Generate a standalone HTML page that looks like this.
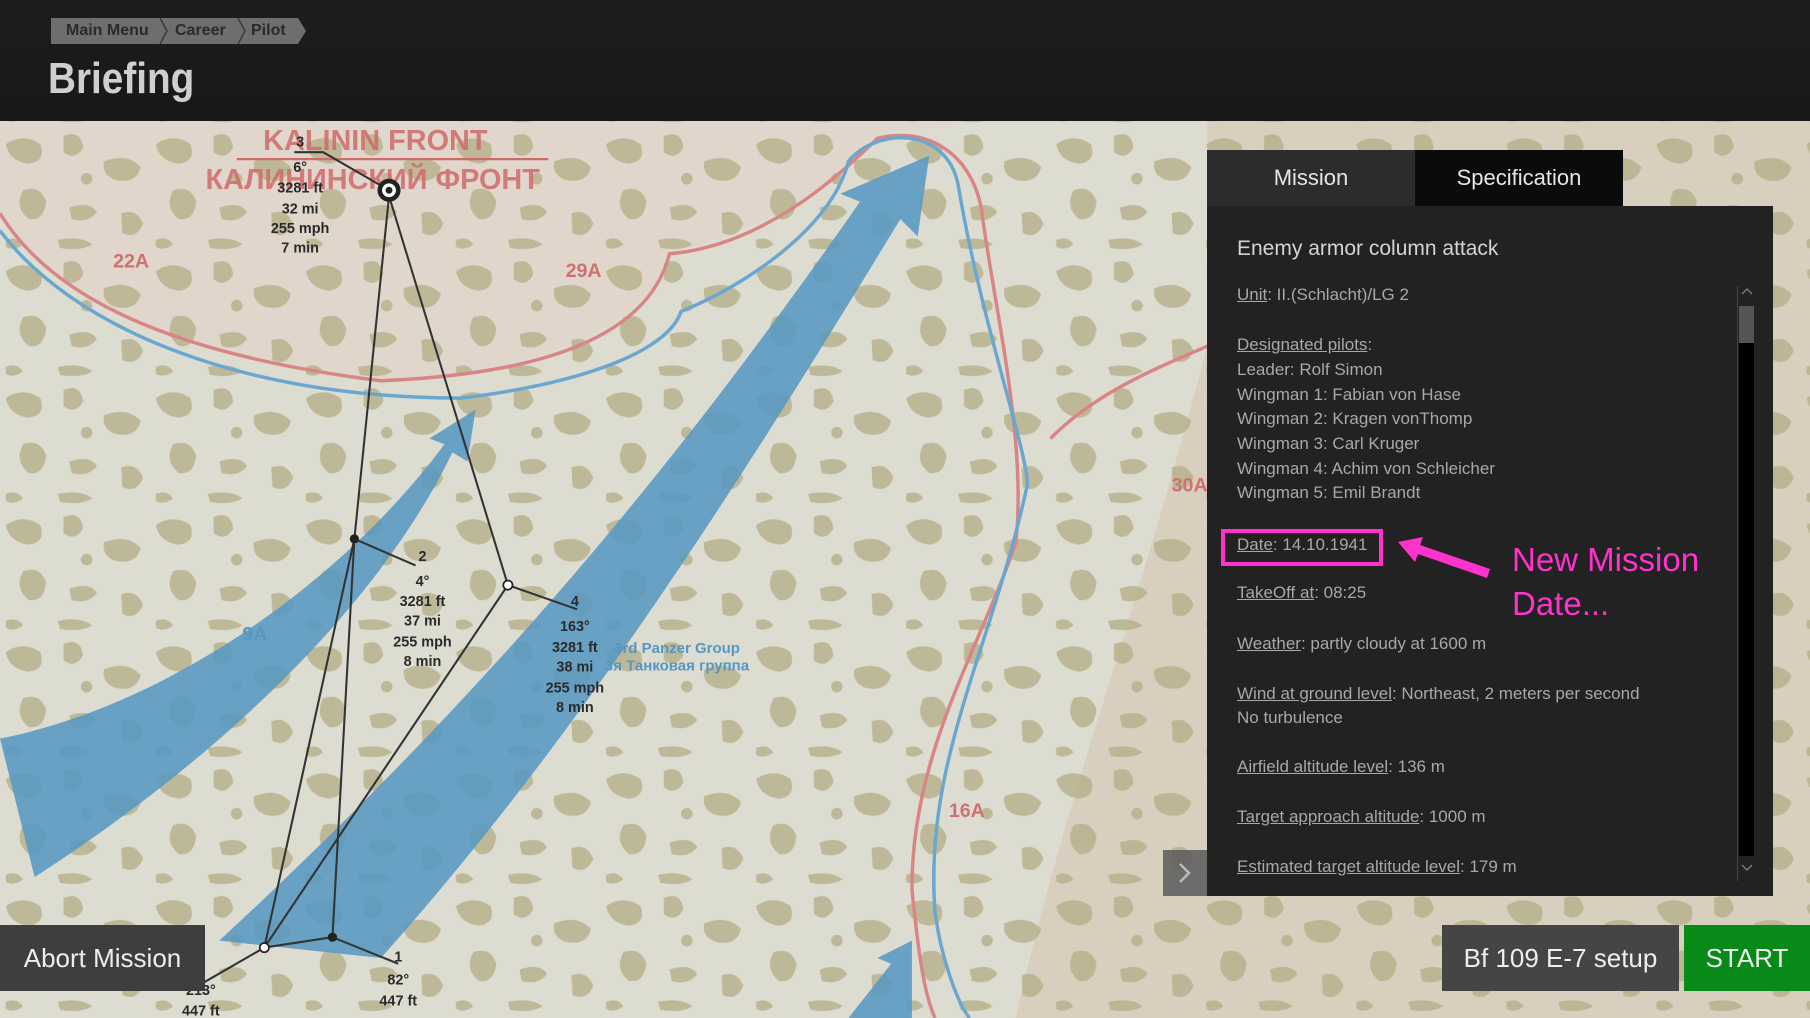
<!DOCTYPE html>
<html><head><meta charset="utf-8"><style>
*{margin:0;padding:0;box-sizing:border-box}
body{width:1810px;height:1018px;overflow:hidden;background:#1b1b1b;font-family:"Liberation Sans",sans-serif;position:relative}
#top{position:absolute;left:0;top:0;width:1810px;height:121px;background:linear-gradient(180deg,#1d1d1d,#181818)}
.bc{position:absolute;top:18px;height:26px;background:#6e6e6e;color:#2a2a2a;font-weight:bold;font-size:16px;line-height:26px}
h1{position:absolute;left:48px;top:54px;color:#cfcfcf;font-size:44px;font-weight:bold;transform:scaleX(0.88);transform-origin:0 0}
#map{position:absolute;left:0;top:121px}
.panel{position:absolute;left:1207px;top:206px;width:566px;height:690px;background:#222}
.tab{position:absolute;top:150px;height:56px;color:#e6e6e6;font-size:22px;text-align:center;line-height:56px}
.t{position:absolute;left:1237px;color:#a8a8a8;font-size:17px;white-space:nowrap}
.t u{text-decoration:underline}
.btn{position:absolute;top:925px;height:66px;color:#eee;font-size:26px;line-height:66px;text-align:center}
</style></head><body>
<div id="top"></div>
<div class="bc" style="left:51px;width:110px;padding-left:15px">Main Menu</div>
<div class="bc" style="left:161px;width:78px;padding-left:14px">Career</div>
<div class="bc" style="left:239px;width:67px;padding-left:12px;clip-path:polygon(0 0,88% 0,100% 50%,88% 100%,0 100%)">Pilot</div>
<svg style="position:absolute;left:0;top:18px" width="310" height="26"><path d="M160 0 L167 13 L160 26 M238 0 L245 13 L238 26" stroke="#3a3a3a" stroke-width="1.5" fill="none"/></svg>
<h1>Briefing</h1>

<svg id="map" width="1810" height="897" viewBox="0 105 1568 777" preserveAspectRatio="none">
<defs>
<pattern id="blob" width="130" height="110" patternUnits="userSpaceOnUse">
<path d="M5 15 Q20 5 35 15 Q40 30 25 32 Q8 30 5 15Z" fill="#b5b08a"/>
<path d="M55 8 Q70 2 72 18 Q65 30 55 22Z" fill="#b5b08a"/>
<path d="M90 30 Q110 22 122 35 Q118 50 100 46 Q88 42 90 30Z" fill="#b5b08a"/>
<path d="M20 55 Q35 50 40 65 Q38 82 25 80 Q12 70 20 55Z" fill="#b5b08a"/>
<path d="M60 70 Q78 64 84 74 Q76 84 62 80Z" fill="#b5b08a"/>
<path d="M105 75 Q118 70 124 84 Q118 98 106 92Z" fill="#b5b08a"/>
<path d="M5 98 Q15 94 20 102 Q12 108 5 104Z" fill="#b5b08a"/>
<path d="M50 98 Q70 94 80 102 Q70 108 52 105Z" fill="#b5b08a"/>
<circle cx="75" cy="45" r="5" fill="#b5b08a"/>
</pattern>
</defs>
<rect x="0" y="105" width="1568" height="777" fill="#dddcd1"/>
<path d="M0 185 C40 250 130 305 330 330 C450 325 560 290 580 220 C640 205 720 170 760 115 L860 105 L0 105Z" fill="#e0d6cc"/>
<path d="M1046 105 L1568 105 L1568 882 L880 882 C920 700 980 550 1046 300Z" fill="#d9cfbf"/>
<rect x="0" y="105" width="1568" height="777" fill="url(#blob)" opacity="0.8"/>
<g fill="#5597c3" opacity="0.85">
<path d="M0 640 C150 610 300 500 385 385 L372 380 L412 355 L405 400 L392 392 C330 520 200 650 30 760Z"/>
<path d="M190 815 C400 620 560 440 745 175 L728 168 L805 135 L795 205 L780 190 C640 420 500 640 330 830Z"/>
<path d="M735 882 L772 835 L760 830 L790 815 L790 882Z"/>
</g>
<g fill="none" stroke-width="3">
<path d="M0 185 C40 250 130 305 330 330 C450 325 560 300 580 220 C640 215 700 180 760 120 C800 110 840 130 850 180 C860 260 890 380 880 470 C850 560 790 650 790 770 C795 820 800 860 810 882" stroke="#d98585"/>
<path d="M0 200 C60 280 200 345 400 345 C520 330 580 300 590 270 C640 250 720 200 735 140 C760 110 820 110 830 160 C850 280 890 390 890 420 C860 560 800 660 810 790 C815 830 830 870 840 882" stroke="#6aa7d0"/>
<path d="M910 380 C950 340 1000 320 1046 300" stroke="#d98585"/>
</g>
<g font-family="Liberation Sans" font-weight="bold">
<text x="228" y="130" fill="#d06a6a" font-size="25" opacity="0.85">KALININ FRONT</text>
<line x1="205" y1="138" x2="475" y2="138" stroke="#d06a6a" stroke-width="2"/>
<text x="178" y="164" fill="#d06a6a" font-size="25" opacity="0.85">КАЛИНИНСКИЙ ФРОНТ</text>
<text x="98" y="232" fill="#d07070" font-size="17">22A</text>
<text x="490" y="240" fill="#d07070" font-size="17">29A</text>
<text x="210" y="555" fill="#5597c3" font-size="17">9A</text>
<text x="1015" y="426" fill="#d07070" font-size="17">30A</text>
<text x="822" y="708" fill="#d07070" font-size="17">16A</text>
<text x="532" y="566" fill="#5597c3" font-size="13">3rd Panzer Group</text>
<text x="524" y="581" fill="#5597c3" font-size="13">3я Танковая группа</text>
</g>
<g stroke="#333" stroke-width="1.8" fill="none">
<path d="M229 821 L307 467 L337 170 L440 507 L229 821"/>
<path d="M288 812 L307 467"/>
<path d="M229 821 L288 812 M288 812 L345 835 M229 821 L170 855 M307 467 L360 490 M440 507 L500 528 M337 165 L280 132 L255 132"/>
</g>
<circle cx="337" cy="165" r="10" fill="#222"/><circle cx="337" cy="165" r="6" fill="#fff"/><circle cx="337" cy="165" r="3" fill="#222"/>
<circle cx="307" cy="467" r="4" fill="#222"/><circle cx="440" cy="507" r="4" fill="#fff" stroke="#222" stroke-width="1.5"/>
<circle cx="288" cy="812" r="4" fill="#222"/><circle cx="229" cy="821" r="4" fill="#fff" stroke="#222" stroke-width="1.5"/>
<g font-family="Liberation Sans" font-weight="bold" font-size="12.5" fill="#2a2a2a" text-anchor="middle">
<text x="260" y="127">3</text><text x="260" y="149">6°</text><text x="260" y="167">3281 ft</text><text x="260" y="185">32 mi</text><text x="260" y="202">255 mph</text><text x="260" y="219">7 min</text>
<text x="366" y="486">2</text><text x="366" y="508">4°</text><text x="366" y="525">3281 ft</text><text x="366" y="542">37 mi</text><text x="366" y="560">255 mph</text><text x="366" y="577">8 min</text>
<text x="498" y="525">4</text><text x="498" y="547">163°</text><text x="498" y="565">3281 ft</text><text x="498" y="582">38 mi</text><text x="498" y="600">255 mph</text><text x="498" y="617">8 min</text>
<text x="345" y="833">1</text><text x="345" y="853">82°</text><text x="345" y="871">447 ft</text>
<text x="174" y="862">213°</text><text x="174" y="880">447 ft</text>
</g>
</svg>

<div style="position:absolute;left:1163px;top:850px;width:44px;height:46px;background:#5a5a5a;opacity:.85"></div>
<svg style="position:absolute;left:1176px;top:862px" width="18" height="22"><path d="M4 2 L13 11 L4 20" stroke="#bbb" stroke-width="2.5" fill="none"/></svg>

<div class="tab" style="left:1207px;width:208px;background:#2c2c2c">Mission</div>
<div class="tab" style="left:1415px;width:208px;background:#0b0b0b">Specification</div>
<div class="panel"></div>
<div style="position:absolute;left:1737px;top:286px;width:1px;height:595px;background:#444"></div>
<div style="position:absolute;left:1739px;top:306px;width:15px;height:550px;background:#000"></div>
<div style="position:absolute;left:1739px;top:306px;width:15px;height:37px;background:#555"></div>
<svg style="position:absolute;left:1738px;top:284px" width="18" height="600"><path d="M4 10 L9 5 L14 10" stroke="#777" stroke-width="1.5" fill="none"/><path d="M4 581 L9 586 L14 581" stroke="#777" stroke-width="1.5" fill="none"/></svg>

<div class="t" style="top:237px;color:#d4d4d4;font-size:21px">Enemy armor column attack</div>
<div class="t" style="top:285px"><u>Unit</u>: II.(Schlacht)/LG 2</div>
<div class="t" style="top:335px"><u>Designated pilots</u>:</div>
<div class="t" style="top:360px">Leader: Rolf Simon</div>
<div class="t" style="top:385px">Wingman 1: Fabian von Hase</div>
<div class="t" style="top:409px">Wingman 2: Kragen vonThomp</div>
<div class="t" style="top:434px">Wingman 3: Carl Kruger</div>
<div class="t" style="top:459px">Wingman 4: Achim von Schleicher</div>
<div class="t" style="top:483px">Wingman 5: Emil Brandt</div>
<div class="t" style="top:535px"><u>Date</u>: 14.10.1941</div>
<div class="t" style="top:583px"><u>TakeOff at</u>: 08:25</div>
<div class="t" style="top:634px"><u>Weather</u>: partly cloudy at 1600 m</div>
<div class="t" style="top:684px"><u>Wind at ground level</u>: Northeast, 2 meters per second</div>
<div class="t" style="top:708px">No turbulence</div>
<div class="t" style="top:757px"><u>Airfield altitude level</u>: 136 m</div>
<div class="t" style="top:807px"><u>Target approach altitude</u>: 1000 m</div>
<div class="t" style="top:857px"><u>Estimated target altitude level</u>: 179 m</div>

<div style="position:absolute;left:1221px;top:529px;width:162px;height:37px;border:4px solid #ff33cc"></div>
<svg style="position:absolute;left:1390px;top:525px" width="110" height="60"><path d="M100 44 L30 20 L33 12 L8 17 L25 37 L28 29 L97 53Z" fill="#ff33cc"/></svg>
<div style="position:absolute;left:1512px;top:538px;color:#ff33cc;font-size:33px;line-height:44px">New Mission<br>Date...</div>

<div class="btn" style="left:0;width:205px;background:#3e3e3e">Abort Mission</div>
<div class="btn" style="left:1442px;width:237px;background:#454545">Bf 109 E-7 setup</div>
<div class="btn" style="left:1684px;width:126px;background:#078a18">START</div>
</body></html>
